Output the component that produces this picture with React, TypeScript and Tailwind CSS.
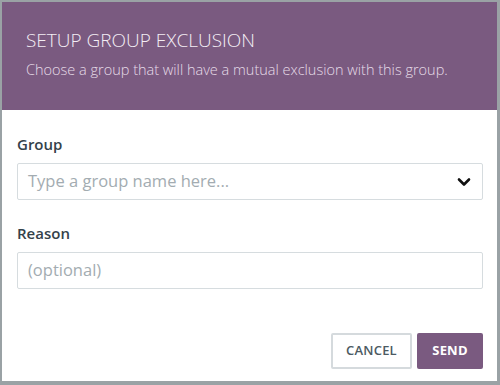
import React from "react";

export default function App() {
  return (
    <div
      className="w-[500px] h-[385px] bg-[#9aa2a5] pt-[2px] pl-[2px] overflow-hidden"
      style={{ fontFamily: '"Open Sans", "Liberation Sans", sans-serif' }}
    >
      <div className="w-[495px] h-[379px] bg-white flex flex-col">
        <div className="h-[108px] bg-[#7a5a80] px-[24px] pt-[24px]">
          <div className="text-[19px] leading-[28px] font-light text-[#f4eef5]">
            SETUP GROUP EXCLUSION
          </div>
          <div className="mt-[6px] text-[14.5px] leading-[20px] font-light text-[#e6dce8]">
            Choose a group that will have a mutual exclusion with this group.
          </div>
        </div>
        <div className="flex flex-col pl-[15px] pr-[14px] pt-[24px]">
          <div className="text-[15px] leading-[20px] font-semibold text-[#34424a]">Group</div>
          <div className="mt-[9px] h-[37px] border border-[#d6dcdf] rounded-[2px] flex items-center justify-between pl-[10px] pr-[11px]">
            <span className="text-[16.5px] text-[#a3acb1]">Type a group name here...</span>
            <svg width="14" height="10" viewBox="0 0 14 10" className="mt-[1px]">
              <path d="M2 2.5 L7 7.5 L12 2.5" fill="none" stroke="#111" strokeWidth="2.6" strokeLinecap="round" strokeLinejoin="round" />
            </svg>
          </div>
          <div className="mt-[23px] text-[15px] leading-[20px] font-semibold text-[#34424a]">Reason</div>
          <div className="mt-[9px] h-[37px] border border-[#d6dcdf] rounded-[2px] flex items-center pl-[10px]">
            <span className="text-[16.5px] text-[#a3acb1]">(optional)</span>
          </div>
          <div className="mt-[44px] flex justify-end gap-[5px]">
            <button className="w-[81px] h-[36px] border-2 border-[#d5dadd] rounded-[2px] bg-white text-[13px] font-semibold text-[#4c5a62] tracking-[0.2px]">
              CANCEL
            </button>
            <button className="w-[66px] h-[36px] rounded-[2px] bg-[#7a5a80] text-[13px] font-bold text-white tracking-[0.2px]">
              SEND
            </button>
          </div>
        </div>
      </div>
    </div>
  );
}
